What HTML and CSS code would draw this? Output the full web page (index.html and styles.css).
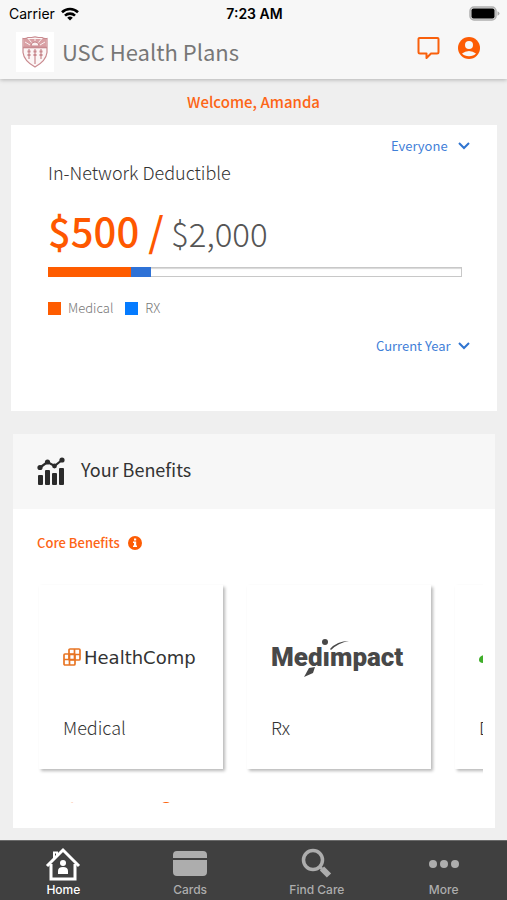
FILE: index.html
```html
<!DOCTYPE html>
<html lang="en">
<head>
    <meta charset="UTF-8">
    <meta name="viewport" content="width=device-width, initial-scale=1.0">
    <title>USC Health Plans</title>
    <link rel="stylesheet" href="styles.css">
</head>
<body>
    <!-- Status bar and app header -->
    <header class="top">
        <div class="status-bar">
            <div class="carrier">
                <span>Carrier</span>
                <svg width="18" height="14" viewBox="0 0 18 14" fill="none" stroke="#000" stroke-width="2.6">
                    <path d="M1 5.2a11.6 11.6 0 0 1 16 0"/>
                    <path d="M4 8.6a7.2 7.2 0 0 1 10 0"/>
                    <path d="M9 13.4L6.2 10.8a4 4 0 0 1 5.6 0z" fill="#000" stroke="none"/>
                </svg>
            </div>
            <div class="time">7:23 AM</div>
            <div class="battery">
                <svg width="31" height="15" viewBox="0 0 31 15">
                    <rect x="1" y="1" width="26" height="13" rx="4" fill="#ddd" stroke="#b0b0b0" stroke-width="1.5"/>
                    <rect x="2.500" y="2.500" width="23" height="10" rx="2" fill="#000"/>
                    <path d="M28.500 5.200q2 .8 2 2.300t-2 2.300z" fill="#aaa"/>
                </svg>
            </div>
        </div>
        <div class="app-bar">
            <div class="logo">
                <svg width="26" height="32" viewBox="0 0 26 32" fill="none" stroke="#c98a8f">
                    <path d="M1 2.500q3 .5 5-1h3.500L13 .8l3.500.7H20q2 1.500 5 1v14Q24 25 13 31 2 25 1 16.500z" fill="#fcf6f6" stroke-width="1.200"/>
                    <path d="M1.500 3h23v8h-23z" fill="#d9a0a4" stroke="none"/>
                    <path d="M9 10a4 4 0 0 1 8 0z" fill="#faf0f0"/>
                    <path d="M13 5V1.500M9.500 6.500L6.500 3M16.500 6.500l3-3.500M8 9L3 6M18 9l5-3" stroke="#faf0f0"/>
                    <path d="M1 11.500h24" stroke-width="1.600"/>
                    <path d="M7 13v10M13 13v15M19 13v10" stroke-width="1.200"/>
                    <path d="M5.500 15.500h3M11.500 15.500h3M17.500 15.500h3M5.500 19h3M11.500 19h3M17.500 19h3" stroke-width="1.800"/>
                </svg>
            </div>
            <h1>USC Health Plans</h1>
            <button class="icon-button" aria-label="Messages">
                <svg width="24" height="24" viewBox="0 0 24 24" fill="none" stroke="#f9600c" stroke-width="2" stroke-linejoin="round">
                    <path d="M2.500 2h18a1 1 0 0 1 1 1v13a1.500 1.500 0 0 1-1.500 1.500h-6L9.500 22v-4.500H3A1.500 1.500 0 0 1 1.500 16V3a1 1 0 0 1 1-1z"/>
                </svg>
            </button>
            <button class="icon-button" aria-label="Profile">
                <svg width="24" height="24" viewBox="0 0 24 24">
                    <circle cx="12" cy="12" r="11" fill="#fd5c04"/>
                    <circle cx="12" cy="9" r="4" fill="#f7f7f7"/>
                    <path d="M5 17.500q3-2.500 7-2.500t7 2.500q-2.500 2.800-7 2.800t-7-2.800z" fill="#f7f7f7"/>
                </svg>
            </button>
        </div>
    </header>

    <main>
        <p class="welcome">Welcome, Amanda</p>

        <!-- Deductible card -->
        <section class="deductible">
            <label class="picker picker-person">
                <select aria-label="Member">
                    <option>Everyone</option>
                </select>
                <svg width="12" height="8" viewBox="0 0 12 8" fill="none" stroke="#2f74d0" stroke-width="2"><path d="M1 1l5 5 5-5"/></svg>
            </label>
            <h2>In-Network Deductible</h2>
            <p class="amount"><strong>$500 /</strong> <span>$2,000</span></p>
            <div class="progress">
                <div class="medical" style="width: 20%"></div>
                <div class="rx" style="width: 5%"></div>
            </div>
            <ul class="legend">
                <li><i class="swatch medical"></i>Medical</li>
                <li><i class="swatch rx"></i>RX</li>
            </ul>
            <label class="picker">
                <select aria-label="Plan year">
                    <option>Current Year</option>
                </select>
                <svg width="12" height="8" viewBox="0 0 12 8" fill="none" stroke="#2f74d0" stroke-width="2"><path d="M1 1l5 5 5-5"/></svg>
            </label>
        </section>

        <!-- Benefits card -->
        <section class="benefits">
            <div class="benefits-header">
                <svg width="28" height="28" viewBox="0 0 28 28" fill="#2b2b2b">
                    <rect x="1" y="18" width="5" height="10" rx="1"/>
                    <rect x="8" y="13" width="5" height="15" rx="1"/>
                    <rect x="15" y="16" width="5" height="12" rx="1"/>
                    <rect x="22" y="11" width="5" height="17" rx="1"/>
                    <path d="M3 10.500L10.500 5l7 4L25 3" fill="none" stroke="#2b2b2b" stroke-width="2.200"/>
                    <circle cx="3" cy="10.500" r="2.600"/>
                    <circle cx="10.500" cy="5" r="2.600"/>
                    <circle cx="17.500" cy="9" r="2.400"/>
                    <circle cx="25" cy="3" r="2.600"/>
                </svg>
                <h2>Your Benefits</h2>
            </div>
            <div class="benefits-list">
                <h3>Core Benefits
                    <svg width="14" height="14" viewBox="0 0 14 14"><circle cx="7" cy="7" r="7" fill="#fd5c04"/><path d="M6 2.500h2.200v2H6zM5 5.500h3.200v4H9V11H5V9.500h1V7H5z" fill="#fff"/></svg>
                </h3>
                <div class="tiles">
                    <a class="tile" href="#medical">
                        <span class="tile-logo healthcomp">
                            <svg width="18" height="18" viewBox="0 0 18 18" fill="#fff" stroke="#e87524" stroke-width="1.700">
                                <rect x="6" y="1" width="11" height="11" rx="1"/>
                                <path d="M11.500 1v11M6 6.500h11"/>
                                <rect x="1" y="6" width="11" height="11" rx="1" fill="none"/>
                                <path d="M6.500 6v11M1 11.500h11"/>
                            </svg>
                            <span>HealthComp</span>
                        </span>
                        <span class="tile-name">Medical</span>
                    </a>
                    <a class="tile" href="#rx">
                        <span class="tile-logo medimpact">
                            <span>Med&#305;mpact</span>
                            <svg class="swoosh" width="134" height="40" viewBox="0 0 134 40" fill="#484848">
                                <circle cx="54" cy="5" r="3"/>
                                <path d="M59 12Q66 4 78 4 67 6 60 13z"/>
                                <path d="M44 30l-6 1-5 9 9-4z"/>
                            </svg>
                        </span>
                        <span class="tile-name">Rx</span>
                    </a>
                    <a class="tile" href="#dental">
                        <span class="tile-logo">
                            <svg width="18" height="18" viewBox="0 0 18 18" fill="#3fae2a"><path d="M0 12q0-4 5-5l8 2v6H5q-5 0-5-3z"/></svg>
                        </span>
                        <span class="tile-name">Dental</span>
                    </a>
                </div>
                <h3>Benefits Programs
                    <svg width="14" height="14" viewBox="0 0 14 14"><circle cx="7" cy="7" r="7" fill="#fd5c04"/><path d="M6 2.500h2.200v2H6zM5 5.500h3.200v4H9V11H5V9.500h1V7H5z" fill="#fff"/></svg>
                </h3>
            </div>
        </section>
    </main>

    <!-- Tab bar -->
    <nav class="tabs">
        <a class="active" href="#home">
            <svg width="36" height="34" viewBox="0 0 36 34" fill="none" stroke="#fff">
                <path d="M2 19L18 3l16 16" stroke-width="3"/>
                <path d="M9 12V5.500h3V9" stroke-width="2"/>
                <path d="M6 17v15h24V17" stroke-width="3"/>
                <circle cx="18" cy="16" r="3" fill="#fff" stroke="none"/>
                <path d="M13 27v-3q0-4 5-4t5 4v3z" fill="#fff" stroke="none"/>
            </svg>
            Home
        </a>
        <a href="#cards">
            <svg width="36" height="34" viewBox="0 0 36 34" fill="#adadad">
                <path d="M1 11V8q0-4 4-4h26q4 0 4 4v3zM1 13h34v12q0 4-4 4H5q-4 0-4-4z"/>
            </svg>
            Cards
        </a>
        <a href="#find-care">
            <svg width="36" height="34" viewBox="0 0 36 34" fill="none" stroke="#adadad">
                <circle cx="14" cy="13" r="9.500" stroke-width="3.500"/>
                <path d="M20 19l3 3" stroke-width="3"/>
                <path d="M23 21.500l7 7" stroke-width="6"/>
            </svg>
            Find Care
        </a>
        <a href="#more">
            <svg width="36" height="34" viewBox="0 0 36 34" fill="#adadad">
                <circle cx="7" cy="17" r="4"/><circle cx="18" cy="17" r="4"/><circle cx="29" cy="17" r="4"/>
            </svg>
            More
        </a>
    </nav>
</body>
</html>
```
FILE: styles.css
```css
* {
    box-sizing: border-box;
}

body {
    margin: 0;
    min-height: 100vh;
    display: flex;
    flex-direction: column;
    background-color: #efefef;
    color: #333333;
    font-family: "Noto Sans CJK SC", "Open Sans", sans-serif;
}

h1, h2, h3, p, ul {
    margin: 0;
    padding: 0;
    font-weight: normal;
}

svg {
    flex: none;
    display: block;
}

a {
    color: inherit;
    text-decoration: none;
}

/* Header */
.top {
    background-color: #f7f7f7;
    box-shadow: 0 1px 4px rgba(0, 0, 0, 0.25);
}

.status-bar {
    display: grid;
    grid-template-columns: 1fr auto 1fr;
    align-items: center;
    height: 27px;
    padding: 0 7px 0 9px;
    font-family: Inter, sans-serif;
    font-size: 14px;
    color: #000000;
}

.carrier {
    display: flex;
    align-items: center;
    gap: 6px;
}

.time {
    font-weight: 600;
}

.battery {
    justify-self: end;
}

.app-bar {
    display: flex;
    align-items: center;
    gap: 16px;
    padding: 5px 26px 7px 16px;
}

.logo {
    display: flex;
    justify-content: center;
    align-items: center;
    width: 38px;
    height: 40px;
    background-color: #ffffff;
}

h1 {
    flex: 1;
    margin-left: -8px;
    padding-bottom: 2px;
    font-size: 22px;
    line-height: 38px;
    color: #777777;
}

.icon-button {
    padding: 0;
    margin-bottom: 8px;
    border: none;
    background: none;
    cursor: pointer;
}

/* Main content */
main {
    flex: 1;
    padding-bottom: 12px;
}

.welcome {
    padding: 11px 0;
    font-size: 15px;
    line-height: 24px;
    font-weight: 500;
    text-align: center;
    color: #fd6516;
}

.deductible {
    display: flex;
    flex-direction: column;
    margin: 0 10px 0 11px;
    padding: 11px 35px 55px 37px;
    background-color: #ffffff;
}

.picker {
    display: flex;
    align-items: center;
    align-self: flex-end;
    gap: 7px;
    margin-right: -8px;
}

.picker-person {
    gap: 10px;
}

.picker select {
    appearance: none;
    height: 20px;
    padding: 0;
    border: none;
    background: none;
    font-family: inherit;
    font-size: 13px;
    line-height: 20px;
    color: #3f80d8;
    cursor: pointer;
}

h2 {
    font-size: 18px;
    line-height: 28px;
}

.deductible h2 {
    margin-top: 2px;
    font-weight: 300;
}

.amount {
    margin-top: 19px;
    font-size: 33px;
    line-height: 50px;
    font-weight: 300;
    color: #555555;
}

.amount strong {
    font-size: 40px;
    font-weight: 500;
    color: #fe5800;
}

.progress {
    display: flex;
    height: 10px;
    margin-top: 9px;
    background-color: #ffffff;
    box-shadow: inset 0 0 0 1px #c8c8c8, inset 0 2px 1px #d8d8d8;
}

.medical {
    background-color: #fe5c00;
}

.rx {
    background-color: #2f72d6;
}

.legend {
    display: flex;
    gap: 12px;
    margin: 21px 0 18px;
    list-style: none;
    font-size: 13px;
    line-height: 20px;
    font-weight: 300;
    color: #777777;
}

.legend li {
    display: flex;
    align-items: center;
    gap: 7px;
}

.swatch {
    width: 13px;
    height: 13px;
}

.swatch.rx {
    background-color: #057bff;
}

/* Benefits */
.benefits {
    margin: 23px 12px 0 13px;
    padding-bottom: 25px;
    background-color: #ffffff;
}

.benefits-header {
    display: flex;
    align-items: center;
    gap: 16px;
    height: 75px;
    padding: 0 24px 2px;
    background-color: #f7f7f7;
}

.benefits-header h2 {
    margin-bottom: 4px;
}

.benefits-list {
    height: 294px;
    padding-top: 24px;
    margin: 0 12px 0 24px;
    overflow: hidden;
}

h3 {
    display: flex;
    align-items: center;
    gap: 8px;
    font-size: 13px;
    line-height: 20px;
    font-weight: 500;
    color: #fd6516;
}

.tiles {
    display: flex;
    gap: 24px;
    padding: 32px 2px 30px;
    overflow: hidden;
}

.tile {
    display: flex;
    flex: none;
    flex-direction: column;
    justify-content: space-between;
    width: 184px;
    height: 184px;
    padding: 52px 24px 28px;
    background-color: #ffffff;
    box-shadow: 2px 2px 3px rgba(0, 0, 0, 0.28);
}

.tile-logo {
    display: flex;
    align-items: center;
    height: 40px;
}

.tile-name {
    font-size: 18px;
    line-height: 28px;
    font-weight: 300;
}

.healthcomp {
    gap: 3px;
    font-family: "DejaVu Sans", sans-serif;
    font-size: 18px;
}

.medimpact {
    position: relative;
    font-family: Roboto, sans-serif;
    font-size: 26px;
    font-weight: 900;
    color: #484848;
}

/* Dot and tail lie over the word */
.swoosh {
    position: absolute;
    left: 0;
    top: 0;
}

/* Tab bar */
.tabs {
    display: grid;
    grid-template-columns: repeat(4, 1fr);
    height: 60px;
    border-top: 1px solid #6a6a6a;
    background-color: #404040;
}

.tabs a {
    display: flex;
    flex-direction: column;
    align-items: center;
    padding-top: 6px;
    font-family: Inter, sans-serif;
    font-size: 12px;
    line-height: 18px;
    font-weight: 500;
    color: #adadad;
}

.tabs .active {
    color: #ffffff;
}
```
